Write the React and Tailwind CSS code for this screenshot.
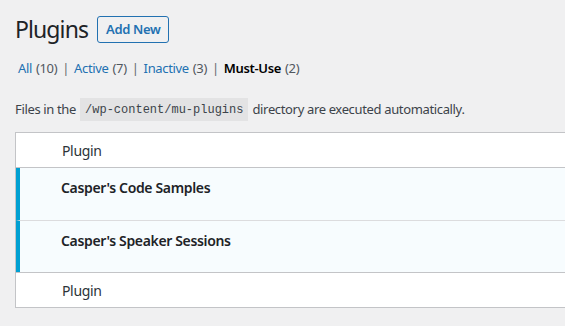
import React from 'react';

const font = { fontFamily: '"Noto Sans", "Open Sans", sans-serif', letterSpacing: '-0.35px' };

const views = [
  { label: 'All', count: 10 },
  { label: 'Active', count: 7 },
  { label: 'Inactive', count: 3 },
  { label: 'Must-Use', count: 2, current: true },
];

const plugins = ["Casper's Code Samples", "Casper's Speaker Sessions"];

export default function App() {
  return (
    <div className="min-h-screen w-full overflow-hidden bg-[#f0f0f1] text-[13px] text-[#3c434a]" style={font}>
      <div className="pl-[15px] pt-[1px]">
        <div className="flex items-center">
          <h1 className="text-[23px] leading-[30px] text-[#1d2327] py-[13px] tracking-[-0.9px]">Plugins</h1>
          <button className="ml-[9px] h-[27px] px-[8px] rounded-[3px] border border-[#2271b1] text-[#2271b1] text-[13px] font-semibold leading-none">
            Add New
          </button>
        </div>

        <ul className="flex items-center -mt-[1px] h-[26px] pl-[3px]">
          {views.map((v, i) => (
            <li key={v.label} className="flex items-center">
              {i > 0 && <span className="mx-[5px] text-[#646970]">|</span>}
              <span className={v.current ? 'text-black font-semibold' : 'text-[#2271b1]'}>{v.label}</span>
              <span className="ml-[4px] text-[#50575e]">({v.count})</span>
            </li>
          ))}
        </ul>

        <p className="mt-[16px] flex items-center">
          Files in the
          <code className="mx-[4px] px-[5px] pt-[3px] pb-[2px] bg-[#e3e3e4] text-[12px] text-[#3c434a] tracking-normal" style={{ fontFamily: '"Liberation Mono", monospace' }}>
            /wp-content/mu-plugins
          </code>
          directory are executed automatically.
        </p>

        <div className="mt-[11px] w-[620px] border border-[#c3c4c7] bg-white">
          <div className="h-[35px] flex items-center pl-[46px] border-b border-[#c3c4c7] text-[14px] text-[#2c3338]">
            Plugin
          </div>
          {plugins.map((name, i) => (
            <div
              key={name}
              className={`h-[52px] bg-[#f7fcfe] border-l-[4px] border-[#00a0d2] pl-[41px] pt-[10px] ${i > 0 ? 'border-t border-t-[#dcdcde]' : ''}`}
            >
              <div className="leading-[20px] text-[14px] font-semibold text-[#1d2327]">{name}</div>
            </div>
          ))}
          <div className="h-[35px] flex items-center pl-[46px] border-t border-[#c3c4c7] text-[14px] text-[#2c3338]">
            Plugin
          </div>
        </div>
      </div>
    </div>
  );
}
